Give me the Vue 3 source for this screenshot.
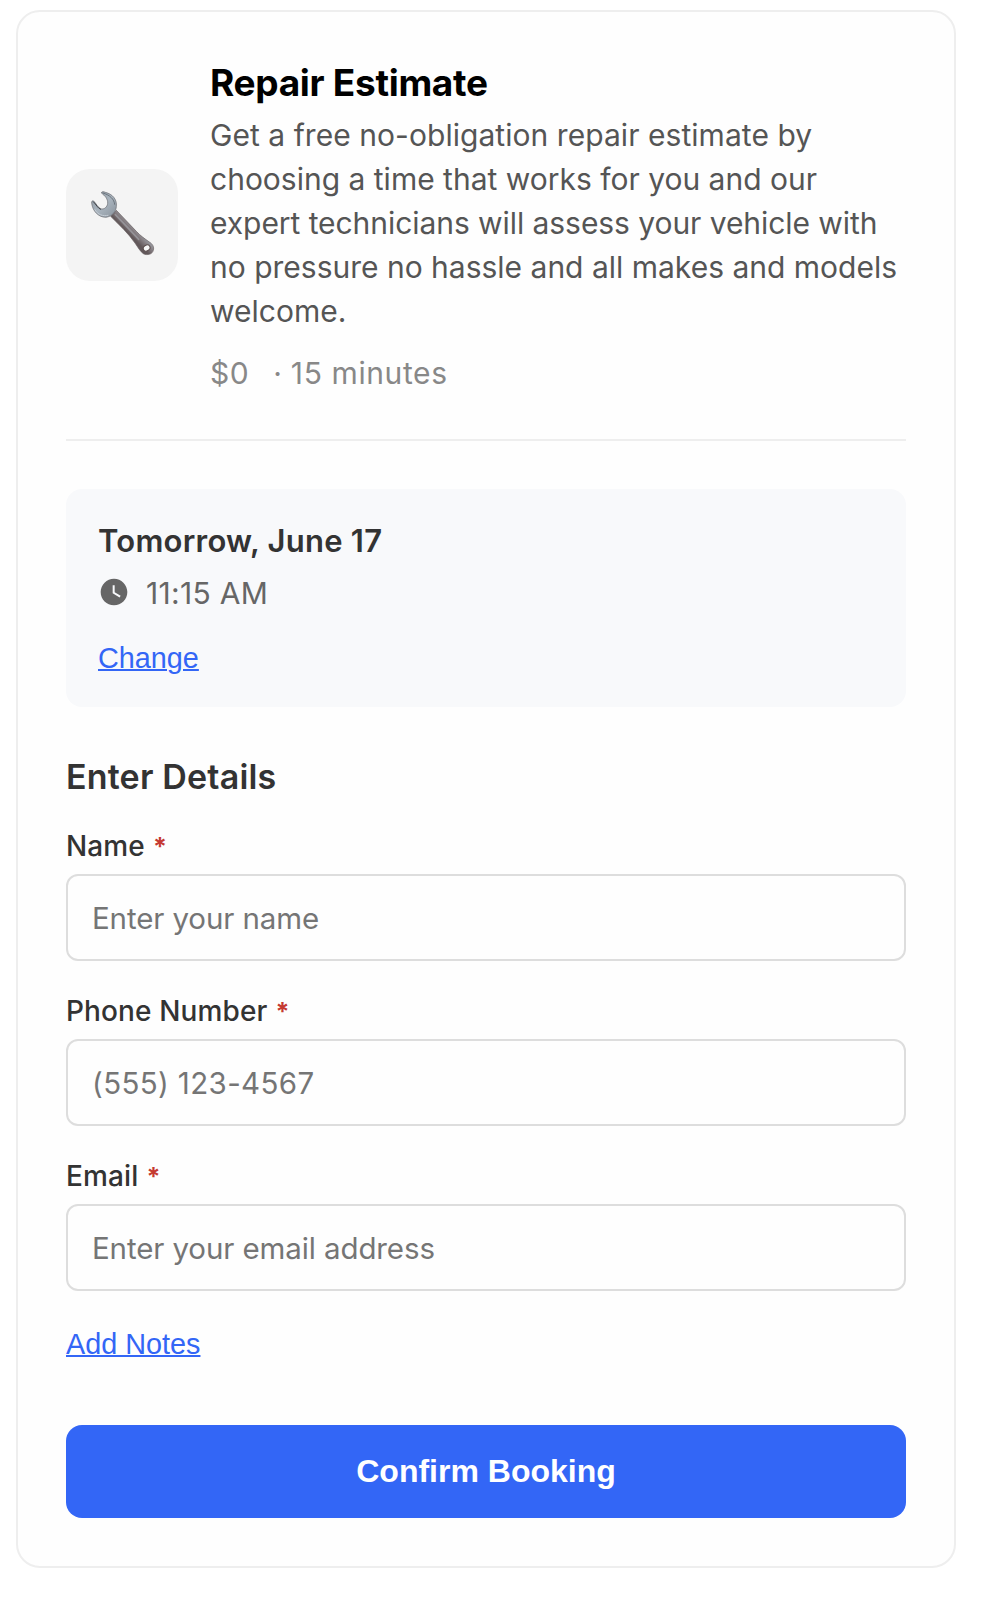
<script setup>
import { reactive } from 'vue'

const description = [
  { text: 'Get a free no-obligation repair estimate by', fit: 'wide' },
  { text: 'choosing a time that works for you and our', fit: 'even' },
  { text: 'expert technicians will assess your vehicle with', fit: 'tight' },
  { text: 'no pressure no hassle and all makes and models', fit: 'even' },
  { text: 'welcome.', fit: 'even' },
]

const fields = [
  { id: 'name', label: 'Name', type: 'text', placeholder: 'Enter your name' },
  { id: 'phone', label: 'Phone Number', type: 'tel', placeholder: '(555) 123-4567' },
  { id: 'email', label: 'Email', type: 'email', placeholder: 'Enter your email address' },
]

const form = reactive({ name: '', phone: '', email: '' })
</script>

<template>
  <main class="card">
    <header class="service">
      <div class="service-icon">
        <svg viewBox="0 0 336 336" aria-hidden="true">
          <defs>
            <linearGradient id="head" x1="0" y1="0" x2="1" y2="1">
              <stop offset="0" stop-color="#8d969f" />
              <stop offset="0.5" stop-color="#a9b4be" />
              <stop offset="1" stop-color="#8a939c" />
            </linearGradient>
            <linearGradient id="shaft" gradientUnits="userSpaceOnUse" x1="185" y1="190" x2="210" y2="166">
              <stop offset="0" stop-color="#62585a" />
              <stop offset="0.45" stop-color="#857e82" />
              <stop offset="0.8" stop-color="#9a9ca3" />
              <stop offset="1" stop-color="#757a82" />
            </linearGradient>
          </defs>
          <path
            d="M134 142 L151 124 C171 145 191 166 211 187 C224 201 236 209 250 219 C260 225 265 234 262 244 C259 256 244 260 232 254 C223 248 216 235 207 222 C187 193 160 168 134 142 Z"
            fill="url(#shaft)"
            stroke="#655c5e"
            stroke-width="2"
          />
          <path d="M148 137 C174 164 196 188 218 211" fill="none" stroke="#a5a6ac" stroke-width="5" stroke-linecap="round" opacity="0.65" />
          <path
            d="M106 72 C107 67 113 67 118 70 C139 75 154 91 151 113 C150 127 139 142 120 145 C97 145 80 126 77 103 C76 97 79 94 83 96 C91 104 95 115 104 119 C114 123 124 114 125 103 C126 90 117 80 106 72 Z"
            fill="url(#head)"
            stroke="#66686e"
            stroke-width="2"
            stroke-linejoin="round"
          />
          <path d="M83 99 C91 107 95 118 104 121" fill="none" stroke="#3f4146" stroke-width="3" stroke-linecap="round" />
          <path d="M111 72 C132 78 145 91 146 106" fill="none" stroke="#6b747d" stroke-width="3" stroke-linecap="round" />
          <path d="M87 122 C95 137 111 143 126 139" fill="none" stroke="#c6ced6" stroke-width="3" stroke-linecap="round" />
          <ellipse cx="242" cy="237" rx="10.5" ry="8.5" transform="rotate(-28 242 237)" fill="#f7f7f7" stroke="#5b4d4d" stroke-width="3" />
        </svg>
      </div>
      <div class="service-info">
        <h1 class="service-title">Repair Estimate</h1>
        <p class="service-text">
          <span v-for="line in description" :key="line.text" class="line" :class="line.fit">{{ line.text }}</span>
        </p>
        <p class="service-meta">
          <span class="price">$0</span><span class="dot">·</span><span class="length">15 minutes</span>
        </p>
      </div>
    </header>

    <section class="slot">
      <h2 class="slot-date">Tomorrow, June 17</h2>
      <div class="slot-time">
        <svg class="clock" viewBox="0 0 24 24" aria-hidden="true">
          <path
            fill="#666"
            d="M12 2C6.500 2 2 6.500 2 12s4.500 10 10 10 10-4.500 10-10S17.500 2 12 2zm4.200 14.200L11 13V7h1.500v5.200l4.500 2.700-.8 1.300z"
          />
        </svg>
        <span>11:15 AM</span>
      </div>
      <button type="button" class="link">Change</button>
    </section>

    <form class="details" @submit.prevent>
      <h2 class="details-title">Enter Details</h2>
      <div v-for="field in fields" :key="field.id" class="field">
        <label class="label" :for="field.id">{{ field.label }}<span class="required">*</span></label>
        <input
          :id="field.id"
          v-model="form[field.id]"
          class="input"
          :class="{ numeric: field.type === 'tel' }"
          :type="field.type"
          :placeholder="field.placeholder"
        />
      </div>
      <button type="button" class="link notes">Add Notes</button>
      <button type="submit" class="confirm">Confirm Booking</button>
    </form>
  </main>
</template>

<style>
body {
  background: #fff;
}
</style>

<style scoped>
.card {
  box-sizing: border-box;
  width: 940px;
  margin: 10px 0 0 16px;
  padding: 48px;
  border: 2px solid #eee;
  border-radius: 24px;
  background: #fefefe;
  font-family: Inter, "Liberation Sans", sans-serif;
  color: #333;
}
h1,
h2,
p {
  margin: 0;
}
.service {
  display: flex;
  align-items: center;
  gap: 32px;
  padding-bottom: 49px;
  border-bottom: 2px solid #eee;
}
.service-icon {
  flex: none;
  width: 112px;
  height: 112px;
  border-radius: 24px;
  background: #f4f4f4;
}
.service-icon svg {
  display: block;
  width: 100%;
  height: 100%;
}
.service-info {
  flex: 1;
}
.service-title {
  font-size: 37px;
  font-weight: 650;
  line-height: 45px;
  letter-spacing: -0.3px;
  color: #000;
}
.service-text {
  margin-top: 8px;
  font-size: 30px;
  line-height: 44px;
  color: #555;
}
.line {
  display: block;
  white-space: nowrap;
}
.wide {
  letter-spacing: 0.05px;
}
.tight {
  letter-spacing: -0.06px;
}
.service-meta {
  display: flex;
  margin-top: 23px;
  font-size: 30px;
  line-height: 34px;
  color: #888;
}
.price {
  letter-spacing: 0.5px;
}
.dot {
  margin: 0 9px 0 24px;
}
.length {
  letter-spacing: 0.6px;
}
.slot {
  margin-top: 48px;
  padding: 32px;
  border-radius: 16px;
  background: #f8f9fb;
}
.slot-date {
  font-size: 31px;
  font-weight: 600;
  line-height: 40px;
  letter-spacing: 0.24px;
}
.slot-time {
  display: flex;
  align-items: center;
  gap: 16px;
  margin: 10px 0 26px;
  font-size: 30px;
  line-height: 44px;
  letter-spacing: 0.3px;
  color: #666;
}
.clock {
  width: 32px;
  height: 32px;
  margin-bottom: 2px;
}
.link {
  display: block;
  padding: 0;
  border: 0;
  background: none;
  font: 28.8px/34px "Liberation Sans", Arial, sans-serif;
  color: #3366f6;
  text-decoration: underline;
  text-decoration-thickness: 2px;
  cursor: pointer;
}
.details-title {
  margin-top: 48px;
  font-size: 34px;
  font-weight: 600;
  line-height: 43px;
  letter-spacing: 0.18px;
}
.field {
  margin-top: 33px;
}
.details-title + .field {
  margin-top: 31px;
}
.label {
  display: block;
  margin-bottom: 11px;
  font-size: 28px;
  font-weight: 500;
  line-height: 34px;
  letter-spacing: 0.13px;
}
.required {
  margin-left: 8px;
  font-size: 25px;
  font-weight: 700;
  line-height: 1;
  color: #c53a32;
}
.input {
  display: block;
  box-sizing: border-box;
  width: 100%;
  height: 87px;
  padding: 0 24px;
  border: 2px solid #ddd;
  border-radius: 12px;
  outline: 0;
  background: #fefefe;
  font: 400 29.5px Inter, "Liberation Sans", sans-serif;
  letter-spacing: -0.11px;
  color: #333;
}
.input::placeholder {
  color: #757575;
  opacity: 1;
}
.numeric {
  letter-spacing: 0.37px;
}
.notes {
  margin: 36px 0 64px;
}
.confirm {
  display: block;
  width: 100%;
  height: 93px;
  padding: 0;
  border: 0;
  border-radius: 16px;
  background: #3366f6;
  font: 700 32px "Liberation Sans", Arial, sans-serif;
  color: #fff;
}
</style>
